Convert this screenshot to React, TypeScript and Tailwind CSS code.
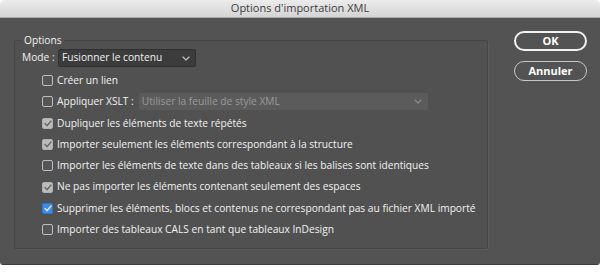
import React from 'react';

const ROWS: { label: string; state: 'off' | 'on' | 'focus'; xslt?: boolean }[] = [
  { label: "Créer un lien", state: 'off' },
  { label: "Appliquer XSLT :", state: 'off', xslt: true },
  { label: "Dupliquer les éléments de texte répétés", state: 'on' },
  { label: "Importer seulement les éléments correspondant à la structure", state: 'on' },
  { label: "Importer les éléments de texte dans des tableaux si les balises sont identiques", state: 'off' },
  { label: "Ne pas importer les éléments contenant seulement des espaces", state: 'on' },
  { label: "Supprimer les éléments, blocs et contenus ne correspondant pas au fichier XML importé", state: 'focus' },
  { label: "Importer des tableaux CALS en tant que tableaux InDesign", state: 'off' },
];

const Chevron = ({ color }: { color: string }) => (
  <svg width="8" height="5" viewBox="0 0 8 5" fill="none">
    <path d="M1 1l3 3 3-3" stroke={color} strokeWidth="1.2" strokeLinecap="round" strokeLinejoin="round" />
  </svg>
);

const Checkbox = ({ state }: { state: 'off' | 'on' | 'focus' }) => {
  if (state === 'off') {
    return <span className="w-[11px] h-[11px] rounded-[2px] border border-[#bdbdbd] bg-[#555555] shrink-0" />;
  }
  const focus = state === 'focus';
  return (
    <span
      className={
        focus
          ? "w-[11px] h-[11px] rounded-[2px] bg-[#3d8ae6] border border-[#2f78d4] shrink-0 flex items-center justify-center"
          : "w-[11px] h-[11px] rounded-[2px] bg-[#bcbcbc] border border-[#b0b0b0] shrink-0 flex items-center justify-center"
      }
    >
      <svg width="8" height="7" viewBox="0 0 8 7" fill="none">
        <path d="M1 3.6l2 2.1L7 1" stroke={focus ? "#dbe8f8" : "#6b6b6b"} strokeWidth="1.4" strokeLinecap="round" strokeLinejoin="round" />
      </svg>
    </span>
  );
};

export default function App() {
  return (
    <div className="w-[600px] h-[273px] bg-white font-['Open_Sans',sans-serif] text-[10.2px] text-[#f2f2f2]">
      <div className="h-[265px] rounded-t-[5px] rounded-b-[3px] overflow-hidden flex flex-col border-b border-[#3e3e3e]">
        {/* Title bar */}
        <div className="h-[18px] shrink-0 bg-gradient-to-b from-[#ececec] to-[#d4d4d4] border-b border-[#a9a9a9] flex items-center justify-center text-[#3c3c3c] text-[11px]">
          Options d'importation XML
        </div>

        <div className="flex-1 bg-[#535353] flex pl-[14px] pr-[13px]">
          <fieldset className="mt-[15px] w-[474px] h-[216px] border border-[#454545] rounded-[2px] pl-[7px] shadow-[1px_1px_0_#5c5c5c] bg-[#515151]">
            <legend className="px-[2px] leading-[14px] font-medium">Options</legend>

            <div className="mt-[2px] flex items-center h-[18px]">
              <span className="w-[36px] font-medium">Mode :</span>
              <div className="w-[138px] h-[18px] rounded-[2px] bg-[#3c3c3c] border border-[#303030] flex items-center justify-between pl-[3px] pr-[5px]">
                <span className="font-medium">Fusionner le contenu</span>
                <Chevron color="#bdbdbd" />
              </div>
            </div>

            <div className="mt-[3px] pl-[20px] flex flex-col">
              {ROWS.map((r, i) => (
                <div key={i} className="h-[21.3px] flex items-center">
                  <Checkbox state={r.state} />
                  <span className="ml-[4px] font-medium whitespace-nowrap">{r.label}</span>
                  {r.xslt && (
                    <div className="ml-[5px] w-[289px] h-[17px] rounded-[2px] bg-[#5b5b5b] flex items-center justify-between pl-[3px] pr-[6px] text-[#9a9a9a]">
                      <span className="font-medium">Utiliser la feuille de style XML</span>
                      <Chevron color="#8a8a8a" />
                    </div>
                  )}
                </div>
              ))}
            </div>
          </fieldset>

          <div className="ml-auto mt-[13px] flex flex-col gap-[10px] w-[73px]">
            <button className="h-[20px] rounded-full border-2 border-[#f2f2f2] text-white font-bold text-[11px] flex items-center justify-center">
              OK
            </button>
            <button className="h-[20px] rounded-full border border-[#c8c8c8] text-white font-bold text-[11px] flex items-center justify-center">
              Annuler
            </button>
          </div>
        </div>
      </div>
    </div>
  );
}
